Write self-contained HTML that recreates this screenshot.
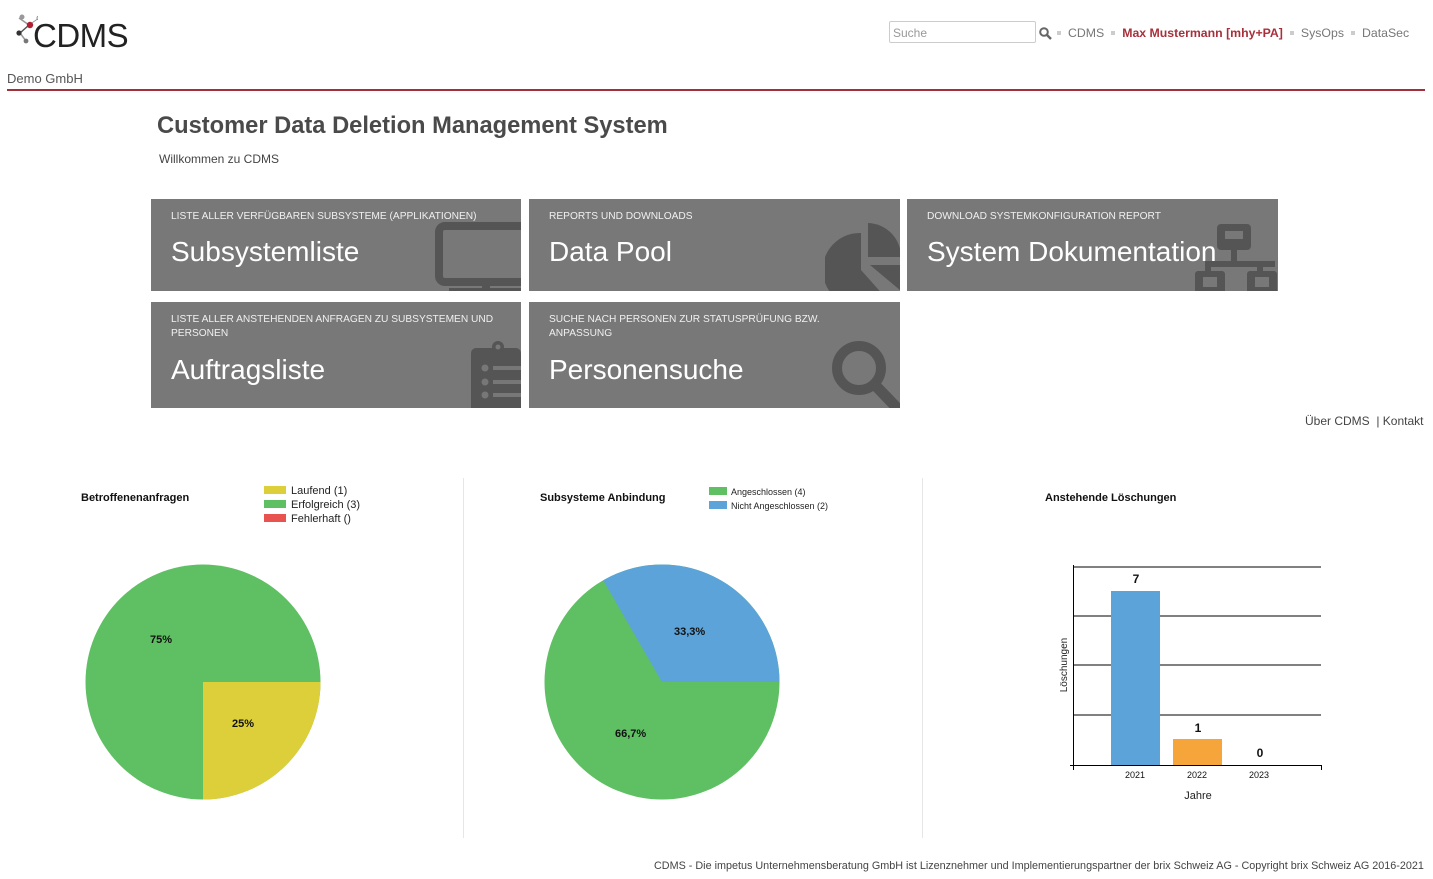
<!DOCTYPE html>
<html><head><meta charset="utf-8"><style>
*{margin:0;padding:0;box-sizing:border-box}
body{width:1433px;height:879px;background:#fff;font-family:"Liberation Sans",Arial,sans-serif;color:#444;position:relative;overflow:hidden}
.a{position:absolute}
.tile{position:absolute;background:#787878;overflow:hidden;color:#fff}
.tile .s{position:absolute;left:20px;top:11px;font-size:10.2px;line-height:14px;color:#f0f0f0;width:340px}
.tile .b{position:absolute;left:20px;font-size:28px;color:#fff;white-space:nowrap}
.tile svg{position:absolute}
.nav{font-size:12.3px;color:#777}
.sq{display:inline-block;width:4px;height:4px;background:#ccc;margin:0 7px 2px;vertical-align:middle}
</style></head><body>
<svg class="a" style="left:14px;top:13px" width="24" height="32">
<line x1="5" y1="5" x2="15" y2="12" stroke="#999" stroke-width="1.5"/>
<line x1="15" y1="12" x2="25" y2="5" stroke="#999" stroke-width="1"/>
<line x1="15" y1="12" x2="6" y2="20" stroke="#555" stroke-width="1.5"/>
<line x1="6" y1="20" x2="12" y2="28" stroke="#999" stroke-width="1.5"/>
<circle cx="8" cy="4" r="2.5" fill="#999"/><circle cx="25" cy="5" r="2" fill="#fff" stroke="#888"/>
<circle cx="16" cy="12" r="3.2" fill="#b02030"/><circle cx="5" cy="20" r="2.6" fill="#333"/><circle cx="12" cy="28" r="2.4" fill="#777"/>
</svg>
<div class="a" style="left:33px;top:17px;font-size:33px;color:#222;letter-spacing:-0.5px">CDMS</div>
<div class="a" style="left:7px;top:71px;font-size:13px;color:#555">Demo GmbH</div>
<div class="a" style="left:7px;top:89px;width:1418px;height:2px;background:#a0303a"></div>
<div class="a" style="left:889px;top:21px;width:147px;height:22px;border:1px solid #ccc;border-radius:2px;font-size:12px;color:#999;padding:4px 3px">Suche</div>
<svg class="a" style="left:1039px;top:27px" width="13" height="13"><circle cx="5" cy="5" r="3.8" fill="none" stroke="#666" stroke-width="2"/><line x1="8" y1="8" x2="12" y2="12" stroke="#666" stroke-width="2.4"/></svg>
<div class="a nav" style="left:1050px;top:26px"><span class="sq"></span>CDMS<span class="sq"></span><b style="color:#a8303a">Max Mustermann [mhy+PA]</b><span class="sq"></span>SysOps<span class="sq"></span>DataSec</div>
<div class="a" style="left:157px;top:113px;font-size:23.7px;font-weight:bold;color:#4a4a4a">Customer Data Deletion Management System</div>
<div class="a" style="left:159px;top:152px;font-size:12px;color:#444">Willkommen zu CDMS</div>
<div class="tile" style="left:151px;top:199px;width:370px;height:92px">
<div class="s">LISTE ALLER VERFÜGBAREN SUBSYSTEME (APPLIKATIONEN)</div><div class="b" style="top:37px">Subsystemliste</div>
<svg style="left:284px;top:23px" width="90" height="70"><rect x="4" y="4" width="90" height="56" rx="6" fill="none" stroke="#555" stroke-width="8"/><rect x="47" y="60" width="8" height="8" fill="#555"/><rect x="14" y="66" width="80" height="6" fill="#555"/></svg>
</div>
<div class="tile" style="left:529px;top:199px;width:371px;height:92px">
<div class="s">REPORTS UND DOWNLOADS</div><div class="b" style="top:37px">Data Pool</div>
<svg style="left:296px;top:22px" width="80" height="75"><path d="M36 12 A37 37 0 1 0 60 76 L36 49 Z" fill="#555"/><path d="M43 2 A34 34 0 0 1 76 36 L43 36 Z" fill="#555"/><path d="M45 44 L76 44 L76 70 Z" fill="#555"/></svg>
</div>
<div class="tile" style="left:907px;top:199px;width:371px;height:92px">
<div class="s">DOWNLOAD SYSTEMKONFIGURATION REPORT</div><div class="b" style="top:37px">System Dokumentation</div>
<svg style="left:288px;top:22px" width="90" height="75"><rect x="22" y="3" width="34" height="26" rx="4" fill="#555"/><rect x="30" y="10" width="18" height="8" fill="#787878"/><rect x="36" y="29" width="6" height="14" fill="#555"/><rect x="10" y="40" width="70" height="6" fill="#555"/><rect x="10" y="40" width="6" height="14" fill="#555"/><rect x="62" y="40" width="6" height="14" fill="#555"/><rect x="0" y="50" width="30" height="22" rx="3" fill="#555"/><rect x="8" y="56" width="14" height="10" fill="#787878"/><rect x="52" y="50" width="30" height="22" rx="3" fill="#555"/><rect x="60" y="56" width="14" height="10" fill="#787878"/></svg>
</div>
<div class="tile" style="left:151px;top:302px;width:370px;height:106px">
<div class="s">LISTE ALLER ANSTEHENDEN ANFRAGEN ZU SUBSYSTEMEN UND PERSONEN</div><div class="b" style="top:52px">Auftragsliste</div>
<svg style="left:320px;top:38px" width="50" height="70"><rect x="0" y="8" width="50" height="70" rx="5" fill="#555"/><circle cx="27" cy="7" r="6" fill="#555"/><circle cx="27" cy="7" r="2.5" fill="#787878"/><circle cx="14" cy="28" r="3.5" fill="#777"/><circle cx="14" cy="42" r="3.5" fill="#777"/><circle cx="14" cy="55" r="3.5" fill="#777"/><rect x="22" y="26" width="28" height="4" fill="#777"/><rect x="22" y="40" width="28" height="4" fill="#777"/><rect x="22" y="53" width="28" height="4" fill="#777"/></svg>
</div>
<div class="tile" style="left:529px;top:302px;width:371px;height:106px">
<div class="s" style="width:300px">SUCHE NACH PERSONEN ZUR STATUSPRÜFUNG BZW. ANPASSUNG</div><div class="b" style="top:52px">Personensuche</div>
<svg style="left:300px;top:36px" width="75" height="75"><circle cx="30" cy="30" r="22" fill="none" stroke="#555" stroke-width="10"/><line x1="45" y1="46" x2="70" y2="72" stroke="#555" stroke-width="11"/></svg>
</div>
<div class="a" style="left:1305px;top:414px;font-size:12px;color:#444">Über CDMS &nbsp;|&nbsp;Kontakt</div>
<div class="a" style="left:463px;top:478px;width:1px;height:360px;background:#e6e6e6"></div>
<div class="a" style="left:922px;top:478px;width:1px;height:360px;background:#e6e6e6"></div>
<div class="a" style="left:81px;top:492px;font-size:11px;font-weight:bold;color:#111">Betroffenenanfragen</div>
<div class="a" style="left:264px;top:484px;font-size:11px;color:#222;line-height:14px">
<div><span style="display:inline-block;width:22px;height:8px;background:#dccf3a;margin-right:5px"></span>Laufend (1)</div>
<div><span style="display:inline-block;width:22px;height:8px;background:#5fbf63;margin-right:5px"></span>Erfolgreich (3)</div>
<div><span style="display:inline-block;width:22px;height:8px;background:#e8524f;margin-right:5px"></span>Fehlerhaft ()</div></div>
<svg class="a" style="left:0;top:0" width="1433" height="879">
<circle cx="203" cy="682" r="117.5" fill="#5fbf63"/>
<path d="M203 682 L320.5 682 A117.5 117.5 0 0 1 203 799.5 Z" fill="#dccf3a"/>
<text x="150" y="643" font-size="11" font-weight="bold" font-family="Liberation Sans" fill="#111">75%</text>
<text x="232" y="727" font-size="11" font-weight="bold" font-family="Liberation Sans" fill="#111">25%</text>
<circle cx="662" cy="682" r="117.5" fill="#5fbf63"/>
<path d="M662 682 L779.5 682 A117.5 117.5 0 0 0 603.25 580.2 Z" fill="#5ba3d9"/>
<text x="674" y="635" font-size="11" font-weight="bold" font-family="Liberation Sans" fill="#111">33,3%</text>
<text x="615" y="737" font-size="11" font-weight="bold" font-family="Liberation Sans" fill="#111">66,7%</text>
<g stroke="#000" stroke-width="1">
<line x1="1073" y1="567" x2="1321" y2="567"/><line x1="1073" y1="616" x2="1321" y2="616"/><line x1="1073" y1="665" x2="1321" y2="665"/><line x1="1073" y1="715" x2="1321" y2="715"/>
<line x1="1073.5" y1="565" x2="1073.5" y2="770"/><line x1="1070" y1="765.5" x2="1321" y2="765.5"/><line x1="1321.5" y1="765" x2="1321.5" y2="770"/>
</g>
<rect x="1111" y="591" width="49" height="174" fill="#5ba3d9"/>
<rect x="1173" y="739" width="49" height="26" fill="#f5a53a"/>
<g font-family="Liberation Sans" font-weight="bold" font-size="12" fill="#111" text-anchor="middle">
<text x="1136" y="583">7</text><text x="1198" y="732">1</text><text x="1260" y="757">0</text></g>
<g font-family="Liberation Sans" font-size="9" fill="#111" text-anchor="middle">
<text x="1135" y="778">2021</text><text x="1197" y="778">2022</text><text x="1259" y="778">2023</text></g>
<text x="1198" y="799" font-family="Liberation Sans" font-size="11" fill="#222" text-anchor="middle">Jahre</text>
<text transform="translate(1067 665) rotate(-90)" font-family="Liberation Sans" font-size="10" fill="#222" text-anchor="middle">Löschungen</text>
</svg>
<div class="a" style="left:540px;top:492px;font-size:11px;font-weight:bold;color:#111">Subsysteme Anbindung</div>
<div class="a" style="left:709px;top:485px;font-size:9px;color:#222;line-height:14px">
<div><span style="display:inline-block;width:18px;height:8px;background:#5fbf63;margin-right:4px"></span>Angeschlossen (4)</div>
<div><span style="display:inline-block;width:18px;height:8px;background:#5ba3d9;margin-right:4px"></span>Nicht Angeschlossen (2)</div></div>
<div class="a" style="left:1045px;top:492px;font-size:11px;font-weight:bold;color:#111">Anstehende Löschungen</div>
<div class="a" style="left:654px;top:860px;font-size:10.8px;color:#444;white-space:nowrap">CDMS - Die impetus Unternehmensberatung GmbH ist Lizenznehmer und Implementierungspartner der brix Schweiz AG - Copyright brix Schweiz AG 2016-2021</div>
</body></html>
